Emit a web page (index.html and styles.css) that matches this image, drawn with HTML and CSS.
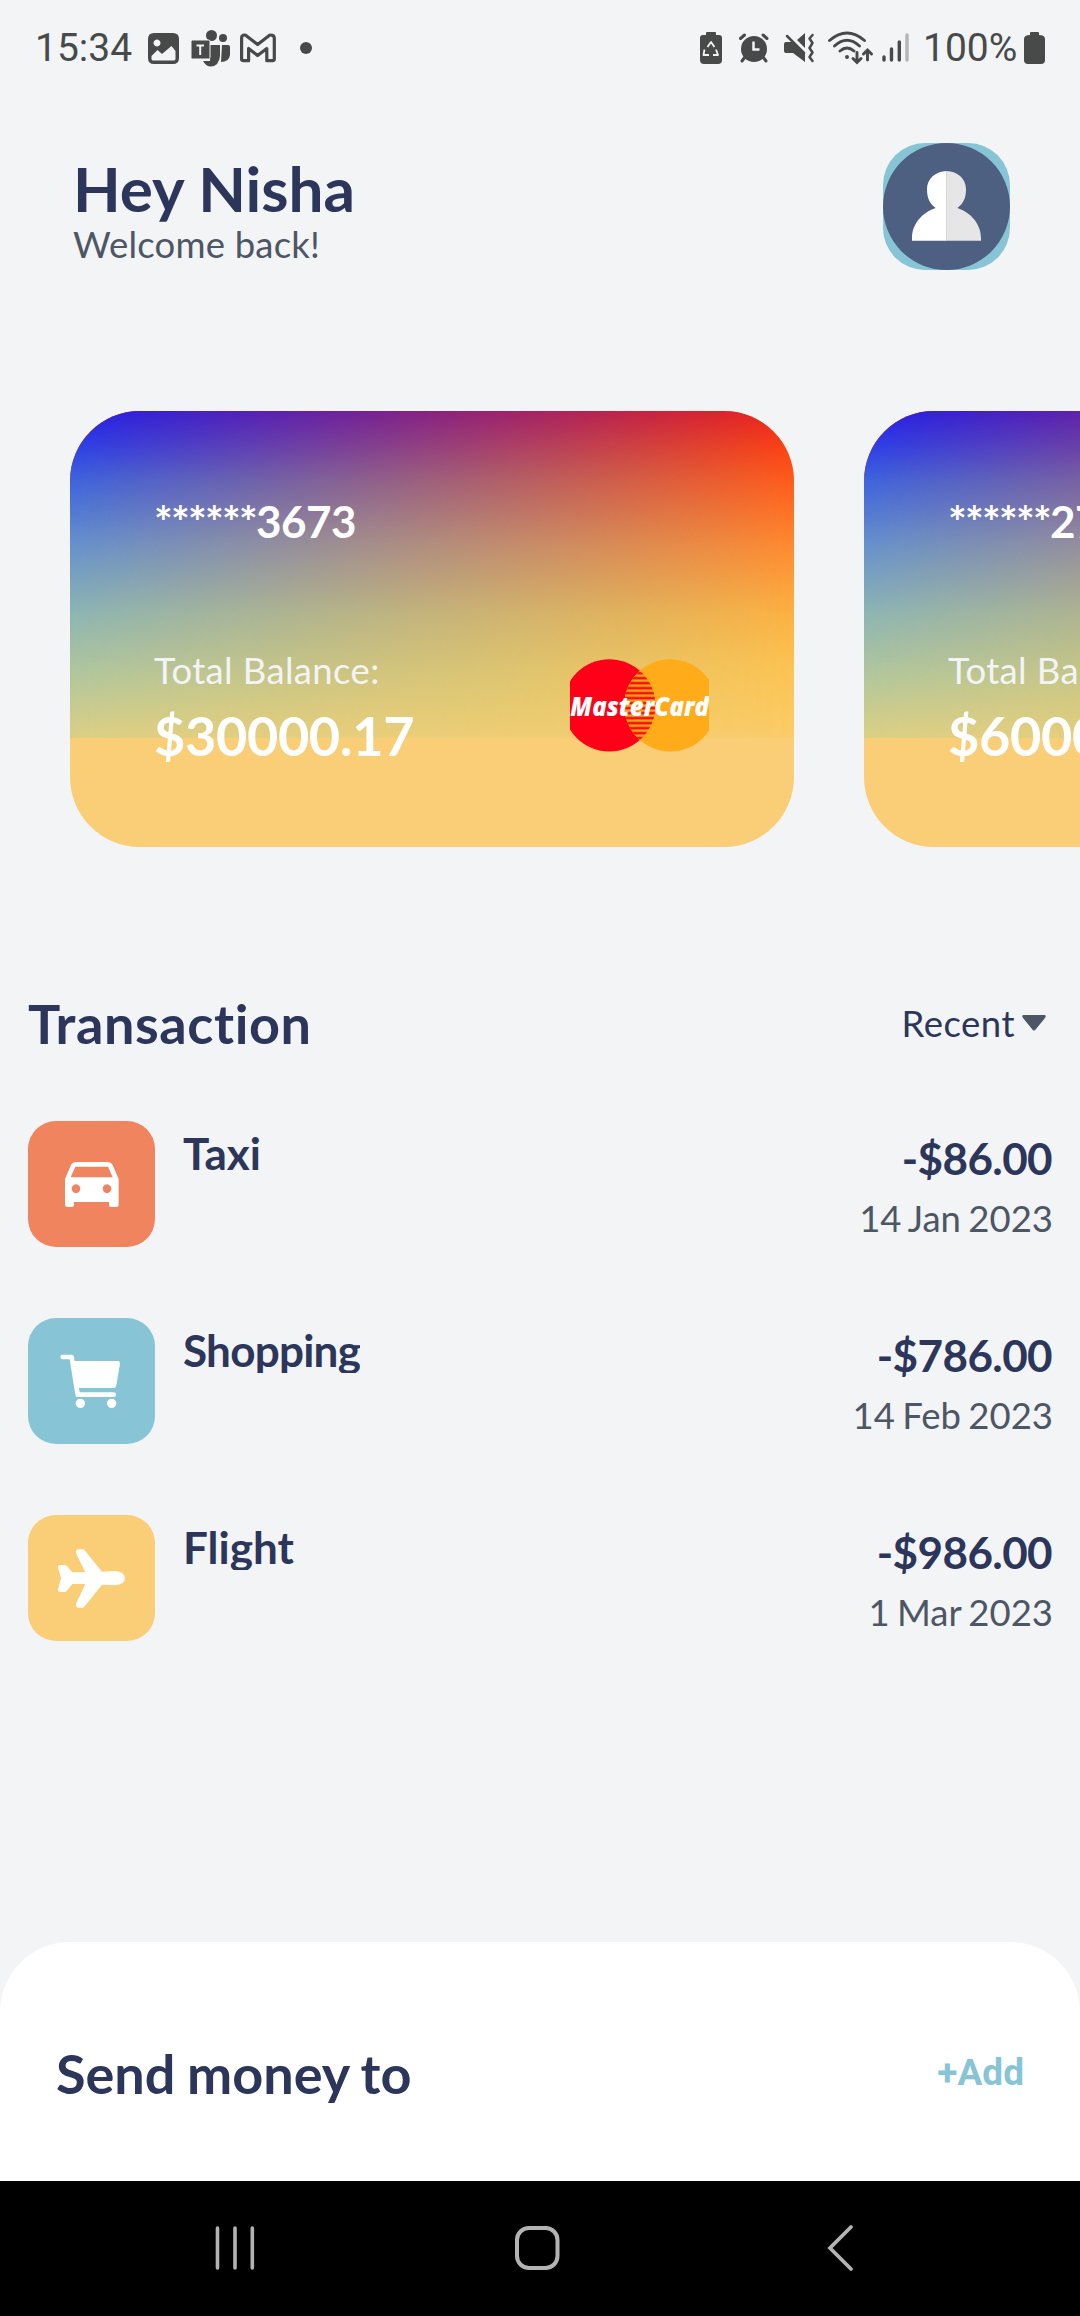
FILE: index.html
```html
<!DOCTYPE html>
<html lang="en">
<head>
<meta charset="utf-8">
<title>Wallet</title>
<link rel="stylesheet" href="styles.css">
</head>
<body>
<div class="screen">
  <div class="status-bar">
    <div class="status-left">
      <span class="clock">15:34</span>
      <svg class="ic-image" width="31" height="40" viewBox="148 28 31 40"><path fill="#484a49" fill-rule="evenodd" d="M154 33h19q6 0 6 6v19q0 6-6 6h-19q-6 0-6-6v-19q0-6 6-6zM151.500 56v3q0 1.500 2 1.500h20q2 0 2-1.500V51l-4-5-9.500 8-4.500-4zM157 39.500a3.500 3.500 0 1 0 .01 0z"/></svg>
      <svg class="ic-teams" width="39" height="40" viewBox="191 28 39 40"><g fill="#484a49"><circle cx="211.500" cy="35.500" r="5.500"/><circle cx="223" cy="38" r="4"/><path d="M222 45h6q2 0 2 2v8q-1 7-9 7zM203 61h7V45h10v11q-1 10-9 10.500-5 0-8-5.500z"/><rect x="191" y="40" width="19" height="19" rx="1.500" stroke="#f2f4f6" stroke-width="1"/></g><path d="M196.500 45.500h7.500M200.200 45.500v9.500" stroke="#f2f4f6" stroke-width="2" fill="none"/></svg>
      <svg class="ic-mail" width="36" height="40" viewBox="240 28 36 40"><path d="M241.600 38q0-3 3-3 1 0 2 1l11 8.500 11-8.500q1-1 2-1 3.500 0 3.700 3v21q0 1.700-2 1.700h-5.500V48.500l-9.200 7-9-7v12.200h-5q-2 0-2-1.700z" fill="none" stroke="#484a49" stroke-width="3.200" stroke-linejoin="round"/></svg>
      <svg class="ic-dot" width="12" height="40" viewBox="300 28 12 40"><circle cx="306" cy="48" r="6" fill="#484a49"/></svg>
    </div>
    <div class="status-right">
      <svg class="ic-saver" width="22" height="40" viewBox="700 28 22 40"><path fill="#484a49" d="M706 35v-2q0-1 1-1h8q1 0 1 1v2h3q3 0 3 3v22q0 4-4 4h-14q-4 0-4-4V38q0-3 3-3z"/><path d="M707.500 47l3.500-5 3.500 5M716 49.500l2 5.500h-5M704.500 49.500l-1 5.500h5.500" fill="none" stroke="#f2f4f6" stroke-width="1.800" stroke-linejoin="round"/></svg>
      <svg class="ic-alarm" width="30" height="40" viewBox="739 28 30 40"><circle cx="754" cy="49" r="13" fill="#484a49"/><path d="M740.500 38.500l4-3.500M767 38.500l-4-3.500M745 57l-3 4M763 57l3 4" stroke="#484a49" stroke-width="3" stroke-linecap="round"/><path d="M753.500 41.500v8h6" fill="none" stroke="#f2f4f6" stroke-width="2.500"/></svg>
      <svg class="ic-mute" width="30" height="40" viewBox="784 28 30 40"><path fill="#484a49" d="M786 42h7l12 11v9l-12-9h-7q-2 0-2-2v-7q0-2 2-2zM797 40l8-7v15z"/><path d="M787 36l17 17" stroke="#484a49" stroke-width="2.500" stroke-linecap="round"/><path d="M812.500 35l-3 3.500 3 4.500-3 5 3 4.500-3 4.500 3 4" fill="none" stroke="#484a49" stroke-width="2.500" stroke-linejoin="round" stroke-linecap="round"/></svg>
      <svg class="ic-wifi" width="45" height="40" viewBox="828 28 45 40"><g fill="none" stroke="#484a49" stroke-width="2.900" stroke-linecap="round"><path d="M829.500 40.500q17.500-15 35 0M834.500 46q12.500-11.500 25 0M840 51q7-6 14 0"/><path d="M857 52.500V62m-4-3.500l4 4 4-4M867.500 60v-9.500m-4 3.500l4-4 4 4"/></g><circle cx="847" cy="57" r="2" fill="#484a49"/></svg>
      <svg class="ic-signal" width="27" height="40" viewBox="882 28 27 40"><g stroke="#484a49" stroke-width="3.400" stroke-linecap="round"><path d="M884 57v3M891.500 49v11M899.300 42v18"/><path stroke="#b2b4b5" d="M907 35v25"/></g></svg>
      <span class="battery-level">100%</span>
      <svg width="22" height="40" viewBox="1024 28 22 40"><path fill="#484a49" d="M1030 35v-2q0-1 1-1h7q1 0 1 1v2q6 0 6 4v21q0 4-4 4h-13q-4 0-4-4V39q0-4 6-4z"/></svg>
    </div>
  </div>

  <header class="header">
    <div>
      <h1 class="greeting">Hey Nisha</h1>
      <p class="welcome">Welcome back!</p>
    </div>
    <svg class="avatar" viewBox="129 69 381 381"><circle cx="319.500" cy="259.500" r="190.500" fill="#4d6082"/><path fill="#fff" d="M320 153C286 153 261 178 261 207C261 235 269 251 287 264C246 278 216 312 216 355V362H320z"/><path fill="#e6e6e6" d="M319.500 153C353 153 378 178 378 207C378 235 370 251 352 264C393 278 423 312 423 355V362H319.500z"/></svg>
  </header>

  <section class="cards">
    <article class="card">
      <p class="card-number"><span class="mask">******</span>3673</p>
      <div class="card-bottom">
        <div>
          <p class="card-label">Total Balance:</p>
          <p class="card-balance">$30000.17</p>
        </div>
        <svg class="card-brand" viewBox="90 56 417 278">
          <defs>
            <clipPath id="lens"><circle cx="391" cy="194.500" r="138.500"/></clipPath>
            <clipPath id="disc"><circle cx="208" cy="194.500" r="138.500"/></clipPath>
            <pattern id="bars" x="0" y="104" width="20" height="15" patternUnits="userSpaceOnUse"><rect width="20" height="15" fill="#ffab1a"/><rect width="20" height="8" y="5" fill="#f5100c"/></pattern>
          </defs>
          <circle cx="208" cy="194.500" r="138.500" fill="#ff0018"/>
          <circle cx="391" cy="194.500" r="138.500" fill="#ffab1a"/>
          <g clip-path="url(#lens)"><rect x="250" y="90" width="100" height="210" fill="url(#bars)" clip-path="url(#disc)"/></g>
          <text class="brand-name" x="91" y="227" textLength="416" lengthAdjust="spacingAndGlyphs">MasterCard</text>
        </svg>
      </div>
    </article>
    <article class="card">
      <p class="card-number"><span class="mask">******</span>2757</p>
      <div class="card-bottom">
        <div>
          <p class="card-label">Total Balance:</p>
          <p class="card-balance">$6000.00</p>
        </div>
      </div>
    </article>
  </section>

  <section class="transactions">
    <div class="section-head">
      <h2 class="section-title list-title">Transaction</h2>
      <span class="filter">Recent<svg class="caret" width="24" height="16" viewBox="0 0 24 16"><path d="M2 0h20q3 0 1 3L14 14q-2 3-4 0L1 3Q-1 0 2 0z" fill="#4d5665"/></svg></span>
    </div>
    <ul class="list">
      <li class="row">
        <svg class="tile tile-taxi" viewBox="84 453 381 378"><path fill="#fff" fill-rule="evenodd" d="M195 704V627L212 587Q217 576 229 576H322Q334 576 339 587L356 627V704q0 7-7 7h-15q-7 0-7-7V696H222v8q0 7-7 7h-13q-7 0-7-7zM212 622L226 590H324L338 622zM228 643a13 13 0 1 0 .01 0zM321 643a13 13 0 1 0 .01 0z"/></svg>
        <span class="name">Taxi</span>
        <div class="figures"><span class="amount">-$86.00</span><span class="date">14 Jan 2023</span></div>
      </li>
      <li class="row">
        <svg class="tile tile-shopping" viewBox="84 84 381 378"><path d="M188 201H215L233 314H341" fill="none" stroke="#fff" stroke-width="14" stroke-linecap="round" stroke-linejoin="round"/><path fill="#fff" d="M220 213H353q8 0 7 8L349 286q-1 8-9 8H237v12h-10z"/><circle cx="241" cy="340" r="14" fill="#fff"/><circle cx="335" cy="340" r="14" fill="#fff"/></svg>
        <span class="name name-long">Shopping</span>
        <div class="figures"><span class="amount">-$786.00</span><span class="date">14 Feb 2023</span></div>
      </li>
      <li class="row">
        <svg class="tile tile-flight" viewBox="84 675 381 378"><path fill="#fff" d="M181 825H193q5 0 8 3L217 847H256L228 790q-2-12 9-12h11q4 0 7 4L306 845 345 843Q375 846 375 865 375 883 345 886L306 884 254 949q-3 4-7 4h-11q-10-1-8-12L256 882H217L200 903q-3 3-7 3h-12q-8 0-7-8L183 865 174 833q-1-8 7-8z"/></svg>
        <span class="name">Flight</span>
        <div class="figures"><span class="amount">-$986.00</span><span class="date">1 Mar 2023</span></div>
      </li>
    </ul>
  </section>

  <section class="sheet">
    <h2 class="section-title sheet-title">Send money to</h2>
    <span class="add">+Add</span>
  </section>

  <nav class="nav-bar">
    <svg width="46" height="48" viewBox="212 2224 46 48"><path d="M217.500 2228v40M235 2228v40M252.300 2228v40" stroke="#b3b3b3" stroke-width="3.600" stroke-linecap="round"/></svg>
    <svg width="46" height="48" viewBox="514 2224 46 48"><rect x="517" y="2228" width="40.500" height="40" rx="12" fill="none" stroke="#b3b3b3" stroke-width="4"/></svg>
    <svg width="46" height="48" viewBox="816 2224 46 48"><path d="M851 2227L830 2248l21 21" fill="none" stroke="#b3b3b3" stroke-width="3.800" stroke-linecap="round"/></svg>
  </nav>
</div>
</body>
</html>
```
FILE: styles.css
```css
* { box-sizing: border-box; margin: 0; padding: 0; }
body { background: #f2f4f6; font-family: Lato, "Open Sans", sans-serif; font-variant-ligatures: none; color: #2c365a; }
svg { display: block; flex: none; }

.screen { width: 1080px; height: 2316px; overflow: hidden; display: flex; flex-direction: column; }

.status-bar { height: 96px; padding: 0 34px 0 35px; display: flex; justify-content: space-between; align-items: center; font-family: Roboto, sans-serif; font-size: 39px; line-height: 40px; color: #484a49; }
.status-left, .status-right { display: flex; align-items: center; }
.clock { width: 113px; }
.ic-teams { margin-left: 12px; }
.ic-mail { margin-left: 10px; }
.ic-dot { margin-left: 24px; }
.ic-alarm { margin-left: 17px; }
.ic-mute { margin-left: 15px; }
.ic-wifi { margin-left: 14px; }
.ic-signal { margin-left: 9px; }
.battery-level { width: 101px; margin-left: 14px; white-space: nowrap; }

.header { height: 315px; padding: 47px 70px 0 73px; display: flex; justify-content: space-between; align-items: flex-start; }
.greeting { font-size: 62px; line-height: 74px; margin-top: 8px; }
.welcome { font-size: 36.500px; line-height: 44px; margin-top: -3px; letter-spacing: 0.200px; color: #4d5665; }
.avatar { width: 127px; height: 127px; border-radius: 42px; background: #87c5d6; }

.cards { display: flex; gap: 70px; padding-left: 70px; height: 436px; }
.card { position: relative; isolation: isolate; flex: none; width: 724px; height: 436px; padding: 84px 85px 79px 84px; border-radius: 70px; overflow: hidden; background: #facd77; color: #fff; display: flex; flex-direction: column; justify-content: space-between; }
.card::before, .card::after { content: ""; position: absolute; z-index: -1; inset: 0 0 25% 0; }
.card::before { background: linear-gradient(#f02418 0%, #fd4214 11%, #ff5c1b 21%, #ff8a30 41%, #fcb243 62%, #fcc352 78%, #fcca60 93%, #fbcc6b 100%); }
.card::after { background: linear-gradient(#2020ea 0%, #2c40e8 11%, #3e63dd 21%, #6691cc 41%, #8db5b3 62%, #b4c79b 82%, #dccf84 100%); -webkit-mask-image: linear-gradient(to right, #000, transparent); mask-image: linear-gradient(to right, #000, transparent); }
.card-number { font-size: 44px; line-height: 52px; font-weight: 700; letter-spacing: -0.500px; }
.mask { letter-spacing: -1.700px; }
.card-bottom { display: flex; justify-content: space-between; align-items: flex-end; }
.card-label { font-size: 36.500px; line-height: 44px; letter-spacing: 0.350px; color: #f2f4f6; }
.card-balance { font-size: 54px; line-height: 64px; font-weight: 700; margin-top: 12px; letter-spacing: -0.350px; }
.card-brand { width: 139px; height: 93px; margin-bottom: 16px; }
.brand-name { font: italic 800 77px "Open Sans", sans-serif; fill: #fff; }

.transactions { padding: 145px 28px 0; height: 1095px; }
.section-head { height: 64px; display: flex; justify-content: space-between; align-items: center; }
.section-title { font-size: 54px; line-height: 64px; }
.list-title { letter-spacing: 0.600px; }
.filter { display: flex; align-items: center; font-size: 36.500px; line-height: 44px; letter-spacing: 0.500px; padding-right: 6px; margin-top: -3px; }
.caret { margin-left: 7px; }
.list { list-style: none; margin-top: 65px; }
.row { height: 197px; display: flex; align-items: flex-start; }
.tile { width: 127px; height: 126px; border-radius: 28px; }
.tile-taxi { background: #ef845e; }
.tile-shopping { background: #87c5d6; }
.tile-flight { background: #facd77; }
.name { margin: 6px 0 0 28px; font-size: 44px; line-height: 52px; height: 49px; overflow: hidden; font-weight: 700; }
.name-long { letter-spacing: -0.750px; }
.figures { margin-left: auto; display: flex; flex-direction: column; align-items: flex-end; padding-top: 11px; }
.amount { font-size: 44px; line-height: 52px; font-weight: 700; letter-spacing: -0.600px; }
.date { font-size: 36.500px; line-height: 44px; color: #4d5665; margin-top: 12px; margin-right: -1px; word-spacing: -2px; }

.sheet { height: 239px; background: #fff; border-radius: 70px 70px 0 0; padding: 100px 56px 0 56px; display: flex; justify-content: space-between; align-items: flex-start; }
.sheet-title { word-spacing: -1.500px; }
.add { font: 700 37px/44px Roboto, sans-serif; color: #87c5d6; margin-top: 9px; }

.nav-bar { height: 135px; background: #000; padding: 0 218px 2px 212px; display: flex; justify-content: space-between; align-items: center; }
```
